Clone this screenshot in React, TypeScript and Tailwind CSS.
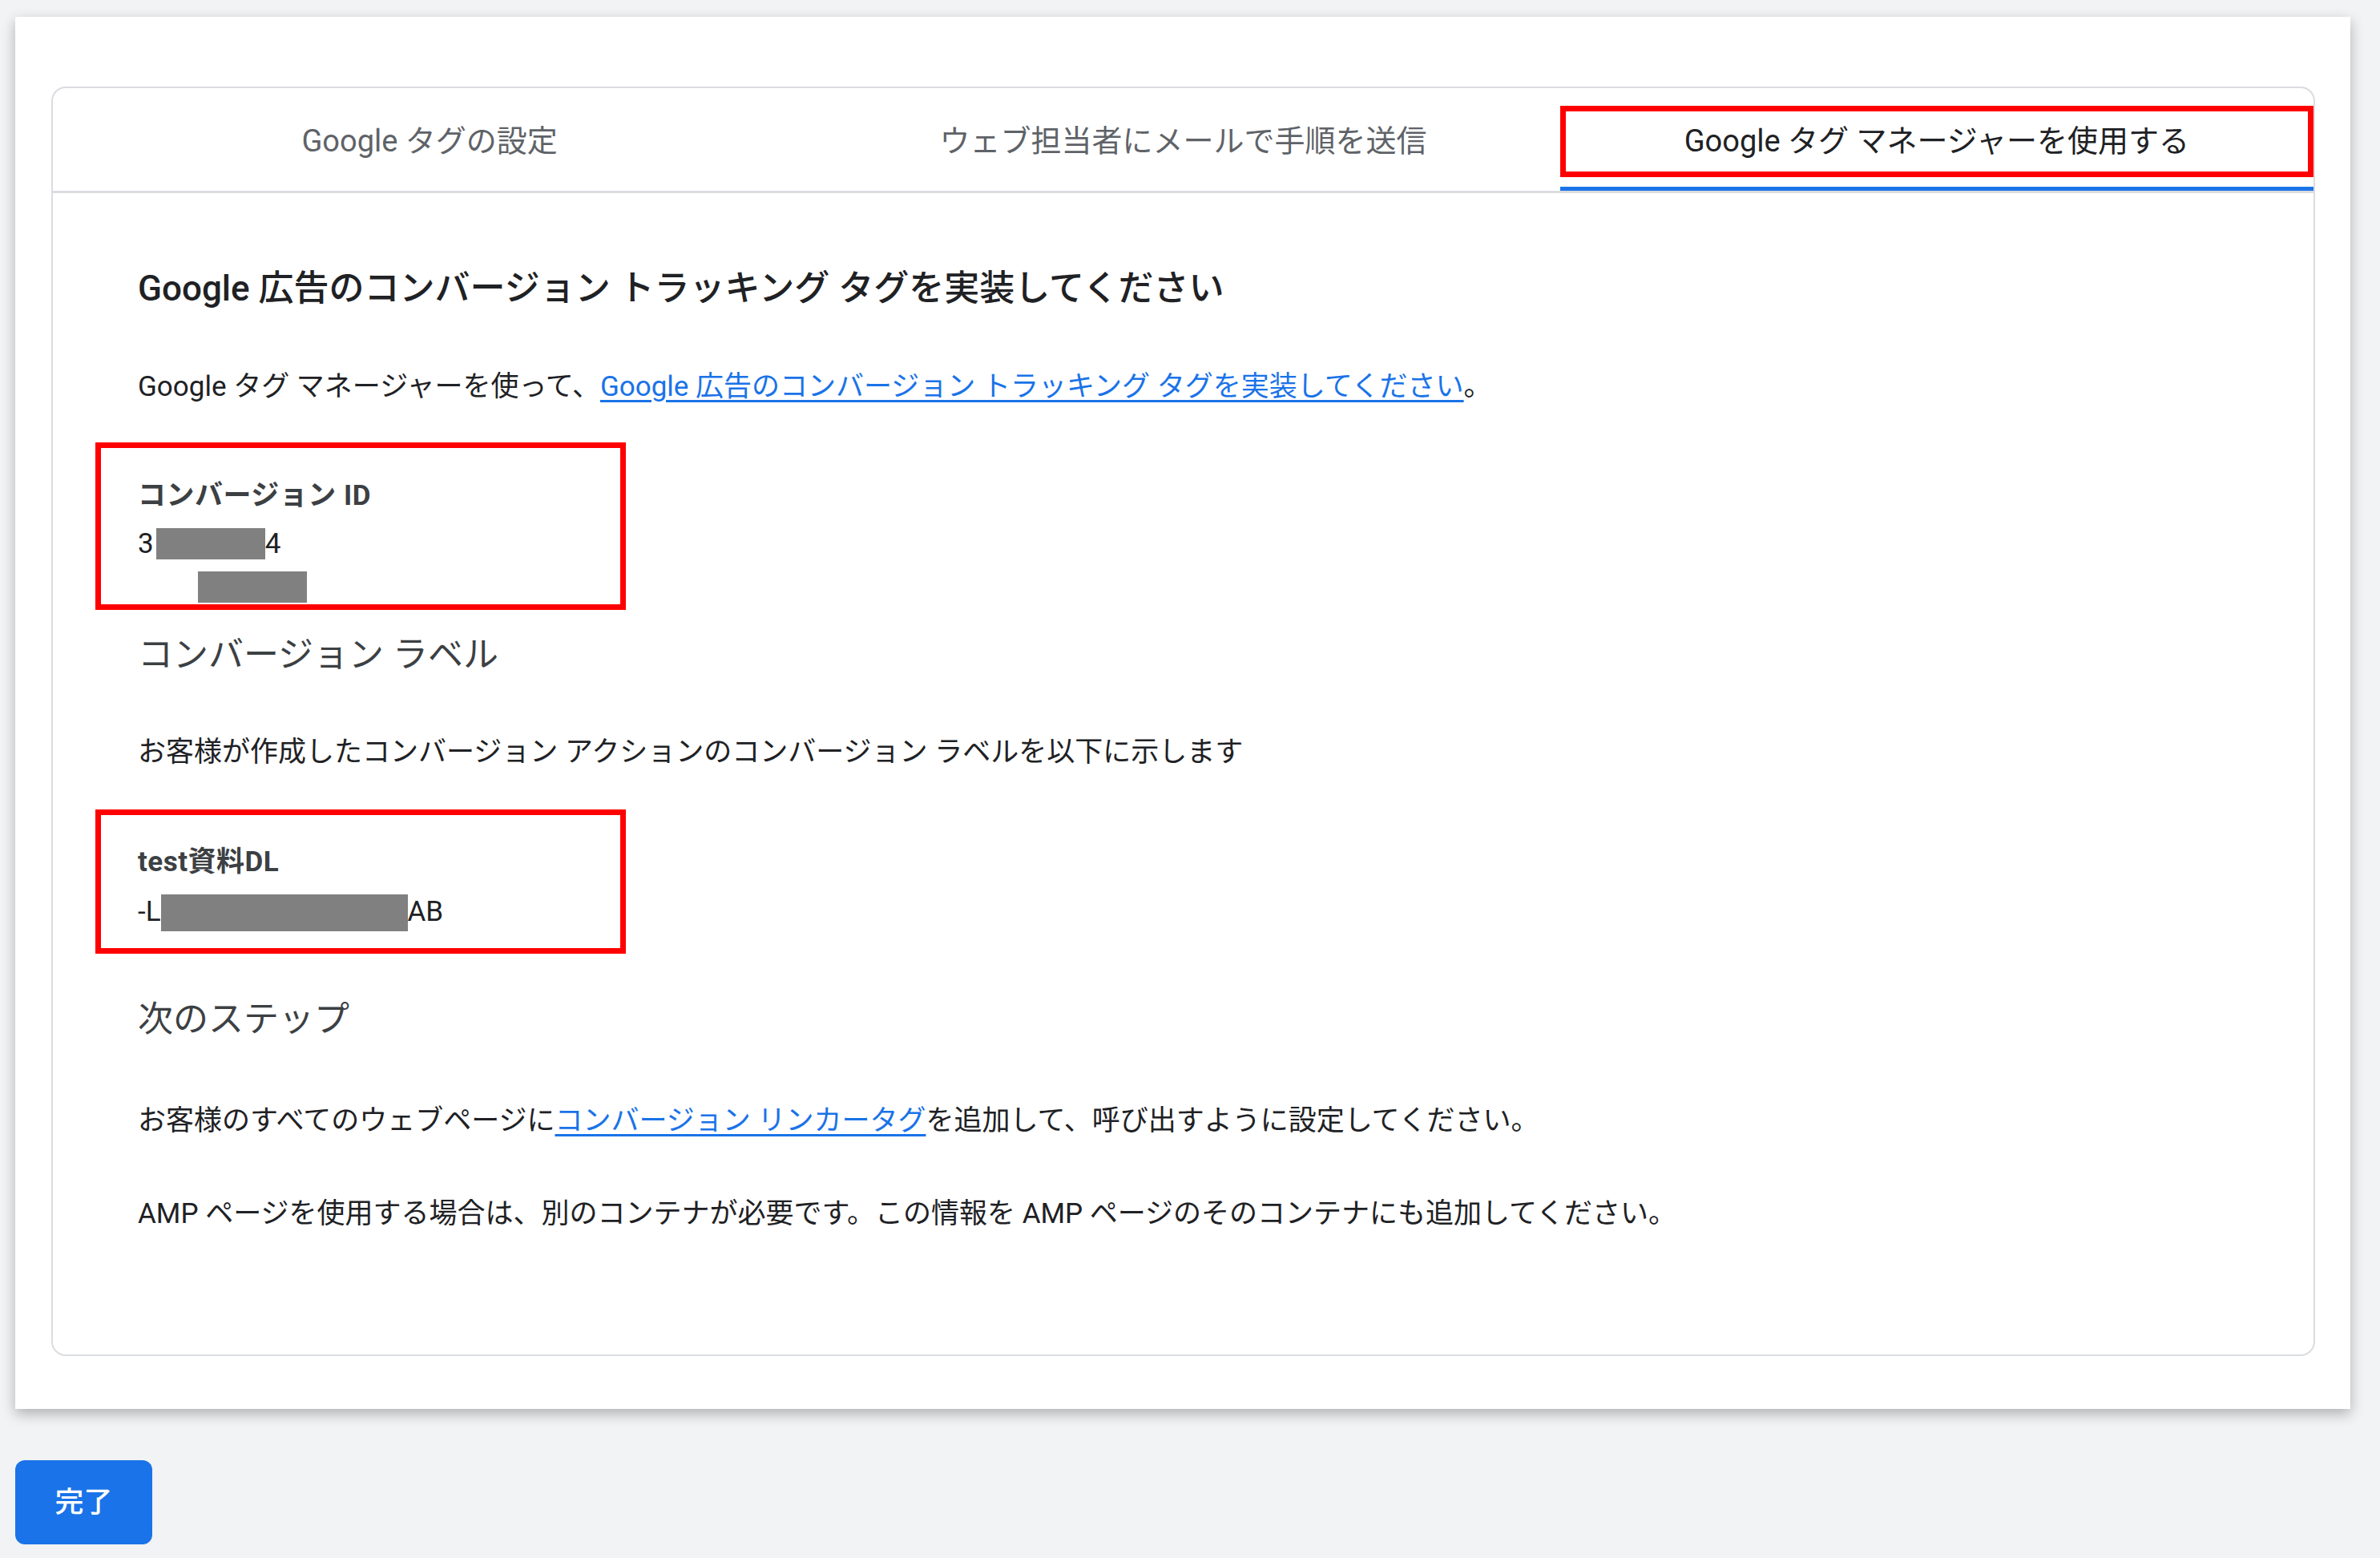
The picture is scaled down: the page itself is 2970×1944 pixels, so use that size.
import React from "react";

const font = { fontFamily: 'Roboto, "Noto Sans CJK JP", sans-serif' };

function Tab({ label, active }: { label: string; active?: boolean }) {
  return (
    <div className="flex-1 flex flex-col pt-[22px]">
      <div
        className={
          "h-[89px] flex items-center justify-center text-[38px] " +
          (active
            ? "border-[7px] border-[#ff0000] text-[#202124]"
            : "border-[7px] border-transparent text-[#5f6368]")
        }
      >
        {label}
      </div>
      <div className={"mt-[12px] h-[5px] " + (active ? "bg-[#1a73e8]" : "bg-transparent")} />
    </div>
  );
}

export default function App() {
  return (
    <div className="min-h-screen bg-[#f1f3f4] pl-[19px] pr-[37px] pt-[21px] pb-[16px]" style={font}>
      <div className="bg-white pl-[45px] pr-[44px] pt-[87px] pb-[66px] shadow-[0_6px_16px_rgba(0,0,0,0.28)]">
        <div className="border-2 border-[#dadce0] rounded-[18px]">
          <div className="flex border-b-[3px] border-[#dadce0]">
            <Tab label="Google タグの設定" />
            <Tab label="ウェブ担当者にメールで手順を送信" />
            <Tab label="Google タグ マネージャーを使用する" active />
          </div>
          <div className="pl-[106px] pr-[60px] pt-[91px] pb-[151px] text-[#202124]">
            <div className="text-[44px] leading-[56px] font-medium text-[#202124]">
              Google 広告のコンバージョン トラッキング タグを実装してください
            </div>
            <div className="mt-[71px] text-[35px] leading-[48px]">
              Google タグ マネージャーを使って、
              <a className="text-[#1a73e8] underline underline-offset-[5px]" href="#">
                Google 広告のコンバージョン トラッキング タグを実装してください
              </a>
              。
            </div>

            <div className="mt-[45px] ml-[-53px] w-[662px] h-[209px] border-[7px] border-[#ff0000] pl-[46px] pt-[36px]">
              <div className="text-[35px] leading-[48px] font-bold text-[#3c4043] tracking-[0.5px]">コンバージョン ID</div>
              <div className="mt-[12px] flex items-start text-[35px] leading-[48px]">
                <span>3</span>
                <div className="ml-[3px] mt-[4px] w-[136px] h-[39px] bg-[#808080]" />
                <span>4</span>
              </div>
              <div className="ml-[75px] mt-[10px] w-[136px] h-[39px] bg-[#808080]" />
            </div>

            <div className="mt-[28px] text-[44px] leading-[56px] text-[#3c4043]">コンバージョン ラベル</div>
            <div className="mt-[70px] text-[35px] leading-[48px]">
              お客様が作成したコンバージョン アクションのコンバージョン ラベルを以下に示します
            </div>

            <div className="mt-[47px] ml-[-53px] w-[662px] h-[180px] border-[7px] border-[#ff0000] pl-[46px] pt-[35px]">
              <div className="text-[35px] leading-[48px] font-bold text-[#3c4043] tracking-[0.5px]">test資料DL</div>
              <div className="mt-[14px] flex items-start text-[35px] leading-[48px]">
                <span>-L</span>
                <div className="mt-[2px] w-[308px] h-[46px] bg-[#808080]" />
                <span>AB</span>
              </div>
            </div>

            <div className="mt-[54px] text-[44px] leading-[56px] text-[#3c4043]">次のステップ</div>
            <div className="mt-[75px] text-[35px] leading-[48px]">
              お客様のすべてのウェブページに
              <a className="text-[#1a73e8] underline underline-offset-[5px]" href="#">
                コンバージョン リンカータグ
              </a>
              を追加して、呼び出すように設定してください。
            </div>
            <div className="mt-[68px] text-[35px] leading-[48px]">
              AMP ページを使用する場合は、別のコンテナが必要です。この情報を AMP ページのそのコンテナにも追加してください。
            </div>
          </div>
        </div>
      </div>
      <button className="mt-[64px] w-[171px] h-[105px] rounded-[12px] bg-[#1a73e8] text-white text-[36px] font-medium flex items-center justify-center">
        完了
      </button>
    </div>
  );
}
